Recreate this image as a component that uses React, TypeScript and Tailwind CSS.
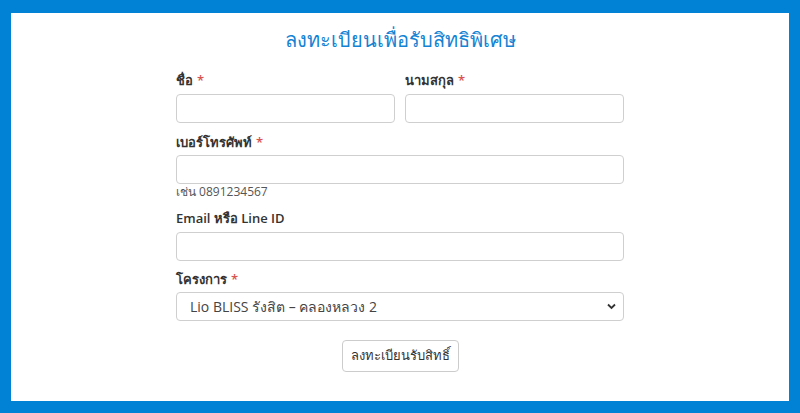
const Label = ({ text, required }: { text: string; required?: boolean }) => (
  <label className="block h-[20px] text-[13px] leading-[20px] font-semibold text-[#333]">
    {text}
    {required && <span className="ml-1 text-[#d9534f]">*</span>}
  </label>
);

const inputCls =
  "block w-full h-[29px] rounded-[4px] border border-[#cfcfcf] bg-white px-3 text-[14px] text-[#444] outline-none";

const App = () => {
  return (
    <div
      className="h-screen w-full bg-[#0282d4] pt-[13px] px-[11px] pb-[12px]"
      style={{ fontFamily: "'Open Sans', 'Noto Sans', sans-serif" }}
    >
      <div className="h-full bg-white flex flex-col items-center pt-[13px]">
        <h1 className="h-[28px] text-[20px] leading-[28px] text-[#1583d3] font-normal">
          ลงทะเบียนเพื่อรับสิทธิพิเศษ
        </h1>

        <form className="w-[448px] mt-[16px]" onSubmit={(e) => e.preventDefault()}>
          <div className="flex gap-[10px]">
            <div className="flex-1">
              <Label text="ชื่อ" required />
              <input type="text" className={inputCls + " mt-[4px]"} />
            </div>
            <div className="flex-1">
              <Label text="นามสกุล" required />
              <input type="text" className={inputCls + " mt-[4px]"} />
            </div>
          </div>

          <div className="mt-[9px]">
            <Label text="เบอร์โทรศัพท์" required />
            <input type="tel" className={inputCls + " mt-[3px]"} />
            <p className="text-[12px] leading-[16px] text-[#555]">เช่น 0891234567</p>
          </div>

          <div className="mt-[8px]">
            <Label text="Email หรือ Line ID" />
            <input type="text" className={inputCls + " mt-[4px]"} />
          </div>

          <div className="mt-[8px]">
            <Label text="โครงการ" required />
            <div className="relative mt-[3px]">
              <select
                className="block w-full h-[29px] appearance-none rounded-[4px] border border-[#cfcfcf] bg-white pl-[13px] pr-8 text-[14px] text-[#444] outline-none"
                defaultValue="lio"
              >
                <option value="lio">Lio BLISS รังสิต – คลองหลวง 2</option>
              </select>
              <svg
                className="pointer-events-none absolute right-[8px] top-[11px]"
                width="9"
                height="7"
                viewBox="0 0 9 7"
              >
                <path d="M1 1.5 L4.5 5 L8 1.5" fill="none" stroke="#333" strokeWidth="1.8" />
              </svg>
            </div>
          </div>

          <div className="flex justify-center mt-[19px]">
            <button
              type="submit"
              className="h-[32px] w-[117px] rounded-[4px] border border-[#cccccc] bg-white text-[13px] text-[#333]"
            >
              ลงทะเบียนรับสิทธิ์
            </button>
          </div>
        </form>
      </div>
    </div>
  );
};

export default App;
